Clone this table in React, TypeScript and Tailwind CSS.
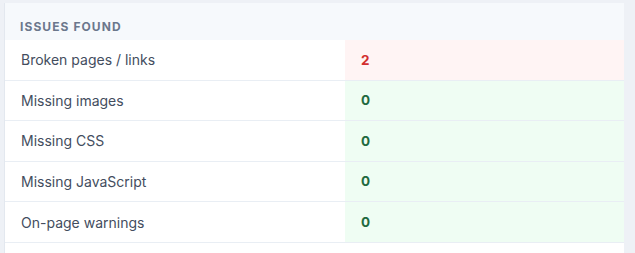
import React from "react";

const rows = [
  { label: "Broken pages / links", value: "2", bad: true },
  { label: "Missing images", value: "0", bad: false },
  { label: "Missing CSS", value: "0", bad: false },
  { label: "Missing JavaScript", value: "0", bad: false },
  { label: "On-page warnings", value: "0", bad: false },
];

export default function App() {
  return (
    <div
      className="h-[253px] w-full bg-[#eef1f6] pl-[4px] pr-[11px] pt-[3px] overflow-hidden"
      style={{ fontFamily: "Inter, 'Noto Sans', sans-serif" }}
    >
      <div className="h-full bg-white border-l border-[#e3e8ef]">
        <div className="h-[37px] bg-[#f6f9fc] flex items-center pl-[15px] pt-[11px]">
          <span className="text-[12px] font-bold tracking-[0.09em] text-[#6b778c] uppercase">
            Issues Found
          </span>
        </div>
        {rows.map((r) => (
          <div
            key={r.label}
            className="grid grid-cols-[340px_1fr] h-[40.6px] border-b border-[#e9eef4]"
          >
            <div className="flex items-center pl-[16px] text-[14px] text-[#434d5e]">
              {r.label}
            </div>
            <div
              className={
                "flex items-center pl-[16px] text-[13.5px] font-bold " +
                (r.bad
                  ? "bg-[#fff4f4] text-[#d32f2f]"
                  : "bg-[#effdf3] text-[#1f6b40]")
              }
            >
              {r.value}
            </div>
          </div>
        ))}
      </div>
    </div>
  );
}
